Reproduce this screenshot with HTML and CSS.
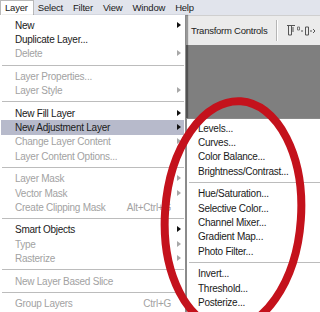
FILE: index.html
```html
<!DOCTYPE html>
<html lang="en">
<head>
  <meta charset="UTF-8" />
  <title>Layer menu</title>
  <link rel="stylesheet" href="styles.css">
</head>
<body>

<div class="screen">
  <div class="menubar">
    <span class="top-item active">Layer</span>
    <span class="top-item">Select</span>
    <span class="top-item">Filter</span>
    <span class="top-item">View</span>
    <span class="top-item">Window</span>
    <span class="top-item">Help</span>
  </div>

  <div class="main">
    <div class="menu">
      <div class="item">New<span class="arrow"></span></div>
      <div class="item">Duplicate Layer...</div>
      <div class="item off">Delete<span class="arrow"></span></div>
      <div class="sep"></div>
      <div class="item off">Layer Properties...</div>
      <div class="item off">Layer Style<span class="arrow"></span></div>
      <div class="sep"></div>
      <div class="item">New Fill Layer<span class="arrow"></span></div>
      <div class="item hot">New Adjustment Layer<span class="arrow"></span></div>
      <div class="item off">Change Layer Content<span class="arrow"></span></div>
      <div class="item off">Layer Content Options...</div>
      <div class="sep"></div>
      <div class="item off">Layer Mask<span class="arrow"></span></div>
      <div class="item off">Vector Mask<span class="arrow"></span></div>
      <div class="item off">Create Clipping Mask<span class="key">Alt+Ctrl+G</span></div>
      <div class="sep"></div>
      <div class="item">Smart Objects<span class="arrow"></span></div>
      <div class="item off">Type<span class="arrow"></span></div>
      <div class="item off">Rasterize<span class="arrow"></span></div>
      <div class="sep"></div>
      <div class="item off">New Layer Based Slice</div>
      <div class="sep"></div>
      <div class="item off">Group Layers<span class="key">Ctrl+G</span></div>
    </div>

    <div class="work">
      <div class="options">
        <span class="label">Transform Controls</span>
        <span class="divider"></span>
        <svg class="align-icons" width="40" height="14" viewBox="0 0 40 14">
          <path d="M1 1.5h8M2.5 2v9h3V2M7 3v5" stroke="#555" fill="none" stroke-width="1"/>
          <path d="M11.5 3h2v3h-2z" stroke="#777" fill="none" stroke-width="1"/>
          <path d="M15 7h2M19.5 3v8h3V3zM24 7h2M27 5l2 2-2 2" stroke="#555" fill="none" stroke-width="1"/>
        </svg>
      </div>
      <div class="canvas"></div>
    </div>
  </div>

  <div class="submenu">
    <div class="item">Levels...</div>
    <div class="item">Curves...</div>
    <div class="item">Color Balance...</div>
    <div class="item">Brightness/Contrast...</div>
    <div class="sep"></div>
    <div class="item">Hue/Saturation...</div>
    <div class="item">Selective Color...</div>
    <div class="item">Channel Mixer...</div>
    <div class="item">Gradient Map...</div>
    <div class="item">Photo Filter...</div>
    <div class="sep"></div>
    <div class="item">Invert...</div>
    <div class="item">Threshold...</div>
    <div class="item">Posterize...</div>
  </div>

  <!-- hand drawn red ring over the submenu -->
  <svg class="ring" width="320" height="312" viewBox="0 0 320 312">
    <ellipse cx="233" cy="215" rx="68" ry="114" transform="rotate(4 233 215)"
             fill="none" stroke="#c4121c" stroke-width="8"/>
  </svg>
</div>

</body>
</html>
```

FILE: styles.css
```css
body {
  margin: 0;
  font-family: "Liberation Sans", Arial, sans-serif;
  font-size: 10px;
  letter-spacing: -0.25px;
  color: #1a1a1a;
}
.screen {
  position: relative;
  width: 320px;
  height: 312px;
  overflow: hidden;
  background: #7f7f7f;
}
.menubar {
  display: flex;
  height: 15px;
  background: #e1e4ec;
  align-items: stretch;
}
.top-item {
  padding: 0 5px;
  line-height: 15px;
  font-size: 9.5px;
  letter-spacing: -0.2px;
}
.top-item.active {
  padding-right: 6px;
  margin-right: -1px;
  background: #fff;
  box-shadow: inset 1px 1px 0 #b9b9b9, inset -1px 0 0 #b9b9b9;
}
.main {
  display: flex;
  height: 297px;
}
.menu {
  width: 185px;
  flex: none;
  background: #fff;
  padding-top: 3px;
  border-right: 1px solid #8c8c8c;
  box-shadow: 2px 0 1px rgba(0,0,0,0.35);
  position: relative;
  z-index: 1;
}
.item {
  display: flex;
  align-items: center;
  height: 14.4px;
  padding: 0 4px 0 15px;
  white-space: nowrap;
}
.item.off {
  color: #a2a2a2;
}
.item.hot {
  background: #b7bacb;
  margin: 0 1px;
  padding-left: 14px;
  padding-right: 3px;
}
.key {
  margin-left: auto;
  margin-right: 10px;
}
.arrow {
  margin-left: auto;
  width: 10px;
  height: 7px;
  position: relative;
}
.arrow::after {
  content: "";
  position: absolute;
  right: 0;
  top: 0;
  border-left: 4px solid #111;
  border-top: 3.5px solid transparent;
  border-bottom: 3.5px solid transparent;
}
.off .arrow::after {
  border-left-color: #a8a8a8;
}
.sep {
  height: 8px;
  margin: 0 1px 0 2px;
  background: linear-gradient(#bcbcbc, #bcbcbc) center / 100% 1px no-repeat;
}
.work {
  flex: 1;
  min-width: 0;
  display: flex;
  flex-direction: column;
}
.options {
  height: 29px;
  display: flex;
  align-items: center;
  background: #ebebeb;
  border-top: 1px solid #cfcfcf;
  padding-left: 5px;
  white-space: nowrap;
}
.label {
  font-size: 9.5px;
  color: #222;
  flex: none;
}
.divider {
  flex: none;
  width: 1px;
  height: 21px;
  margin: 0 9px 0 9px;
  background: #b5b5b5;
  box-shadow: 1px 0 0 #fff;
}
.align-icons {
  flex: none;
}
.canvas {
  flex: 1;
  background: #7f7f7f;
}
.submenu {
  position: absolute;
  left: 186px;
  top: 118px;
  width: 140px;
  height: 200px;
  background: #fff;
  border: 1px solid #8a8a8a;
  padding-top: 2px;
  box-shadow: 2px 2px 2px rgba(0,0,0,0.3);
  z-index: 2;
}
.submenu .item {
  padding-left: 11px;
}
.submenu .sep {
  margin: 0 0 0 2px;
}
.ring {
  position: absolute;
  left: 0;
  top: 0;
  z-index: 3;
  pointer-events: none;
}
```
